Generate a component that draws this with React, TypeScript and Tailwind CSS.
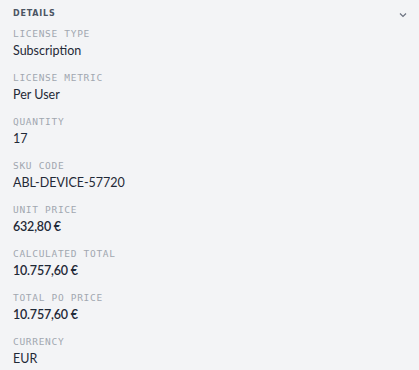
import React from "react";

const rows: [string, string, boolean][] = [
  ["LICENSE TYPE", "Subscription", false],
  ["LICENSE METRIC", "Per User", false],
  ["QUANTITY", "17", false],
  ["SKU CODE", "ABL-DEVICE-57720", false],
  ["UNIT PRICE", "632,80 €", true],
  ["CALCULATED TOTAL", "10.757,60 €", true],
  ["TOTAL PO PRICE", "10.757,60 €", true],
  ["CURRENCY", "EUR", false],
];

export default function App() {
  return (
    <div className="w-[419px] h-[370px] bg-[#f3f4f6] overflow-hidden" style={{ fontFamily: "Lato, 'Noto Sans', sans-serif" }}>
      <div className="flex items-center justify-between pl-[13px] pr-[12px] pt-[8px] h-[20px]">
        <span className="text-[8px] font-bold tracking-[0.8px] text-[#4b5563] leading-none" style={{ fontFamily: "'DejaVu Sans', sans-serif" }}>DETAILS</span>
        <svg width="8" height="6" viewBox="0 0 8 6" className="text-[#6b7280] mt-[2px]">
          <path d="M1 1.5 L4 4.5 L7 1.5" fill="none" stroke="currentColor" strokeWidth="1.2" />
        </svg>
      </div>
      <div className="flex flex-col pl-[13px] pt-[5px]">
        {rows.map(([label, value, bold]) => (
          <div key={label} className="h-[44px] flex flex-col">
            <div className="h-[18px] flex items-center text-[9.5px] tracking-[0.7px] text-[#a1a7b0] leading-none" style={{ fontFamily: "'DejaVu Sans Mono', monospace", fontWeight: 300 }}>{label}</div>
            <div className={`h-[17px] flex items-center text-[12.5px] leading-none text-[#1f2937] ${bold ? "font-semibold tracking-[-0.2px]" : ""}`}>{value}</div>
          </div>
        ))}
      </div>
    </div>
  );
}
